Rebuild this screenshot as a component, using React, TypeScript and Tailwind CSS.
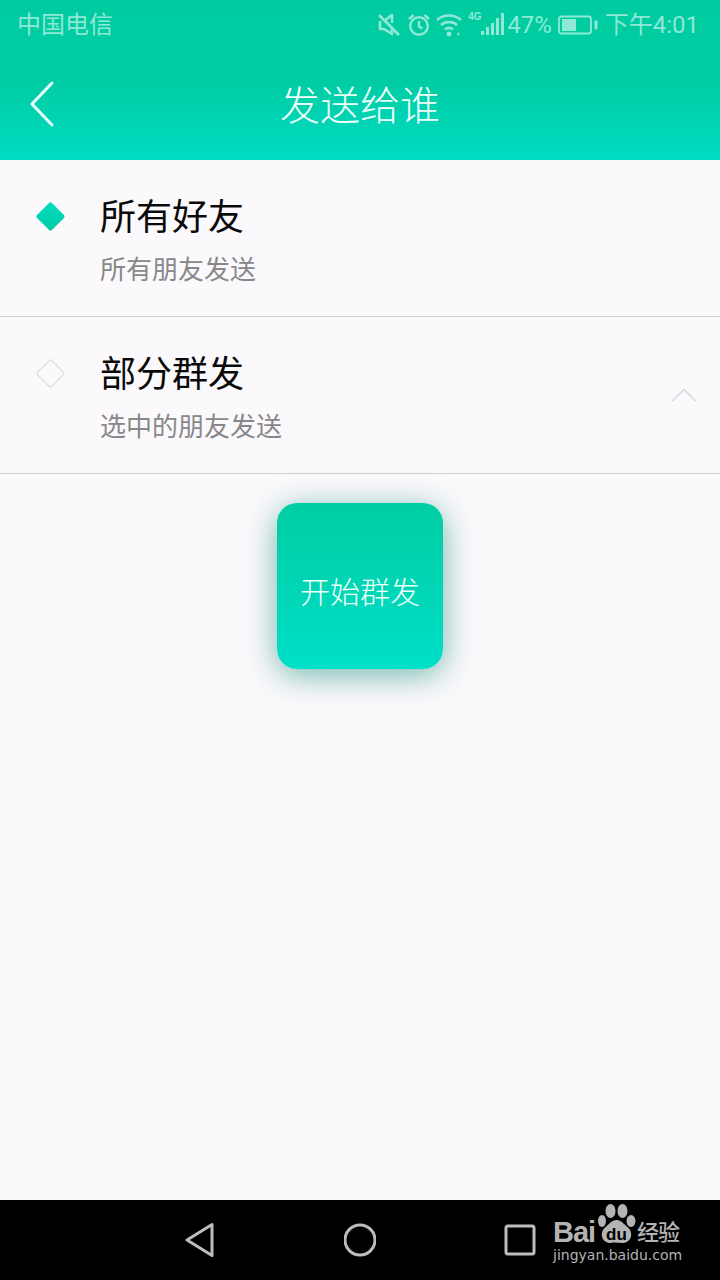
import React from 'react'

const cjk = 'font-["Roboto","Noto_Sans_CJK_SC",sans-serif]'

function StatusIcons() {
  return (
    <div className="flex items-center text-[#8fe9d6]">
      {/* mute */}
      <svg width="22" height="24" viewBox="0 0 22 24" fill="none" stroke="currentColor" strokeWidth="2.6" strokeLinejoin="round">
        <path d="M1 2l20 20" />
        <path d="M2 8v8h4l8 5v-7M6 8l8-6v8" />
      </svg>
      {/* alarm */}
      <svg className="ml-2" width="22" height="24" viewBox="0 0 22 24" fill="none" stroke="currentColor" strokeWidth="2.4">
        <circle cx="11" cy="13" r="8.800" />
        <path d="M11 8v5.500l3.500 2" />
        <path d="M1 6l4.500-4M21 6l-4.500-4" />
      </svg>
      {/* wifi */}
      <svg className="ml-1.5" width="26" height="24" viewBox="0 0 26 24" fill="none" stroke="currentColor" strokeWidth="2.6">
        <path d="M1 7c7-6 17-6 24 0" />
        <path d="M5 12c4.500-4 11.500-4 16 0" />
        <path d="M9 16.500c2.500-2 5.500-2 8 0" />
        <circle cx="13" cy="21" r="2.400" fill="currentColor" stroke="none" />
        <path d="M21.500 19l2.500 2-2.500 2z" fill="currentColor" stroke="none" />
      </svg>
      <div className="relative ml-1.5 flex h-6 w-[36px] items-end justify-end">
        <span className="absolute left-0 top-[-2px] font-['Liberation_Sans',sans-serif] text-[10px] font-bold leading-[12px]">4G</span>
        <svg width="24" height="24" viewBox="0 0 24 24" fill="currentColor">
          <rect x="1" y="18" width="3" height="4" />
          <rect x="6" y="14" width="3" height="8" />
          <rect x="11" y="10" width="3" height="12" />
          <rect x="16" y="5" width="3" height="17" />
          <rect x="21" y="0" width="3" height="22" />
        </svg>
      </div>
      <span className="ml-[3px] font-['Roboto',sans-serif] text-[24px] leading-none">47%</span>
      {/* battery */}
      <svg className="ml-[6px]" width="40" height="20" viewBox="0 0 40 20" fill="none">
        <rect x="1" y="1.500" width="32" height="17" rx="2.500" stroke="currentColor" strokeWidth="1.800" />
        <rect x="4" y="4" width="14" height="12" fill="currentColor" />
        <rect x="36.500" y="5.500" width="3" height="9" rx="1" fill="currentColor" />
      </svg>
      <span className={`ml-[7px] ${cjk} text-[24px] leading-none`}>下午4:01</span>
    </div>
  )
}

function Row({ active, title, sub, chevron }: { active?: boolean; title: string; sub: string; chevron?: boolean }) {
  return (
    <div className="relative flex h-[157px] border-b border-[#cfcfd1]">
      <div className="flex w-[100px] shrink-0 justify-center pt-[46px]">
        <div
          className={
            active
              ? 'h-[21px] w-[21px] rotate-45 rounded-[2px] bg-gradient-to-br from-[#00dcc4] to-[#00cba0]'
              : 'h-[21px] w-[21px] rotate-45 rounded-[2px] border-[1.500px] border-[#d9d9db]'
          }
        />
      </div>
      <div className="flex flex-col pt-[32px]">
        <div className={`${cjk} text-[36px] leading-[52px] text-[#0a0a0a]`}>{title}</div>
        <div className={`${cjk} mt-[7px] text-[26px] leading-[38px] text-[#88888a]`}>{sub}</div>
      </div>
      {chevron && (
        <svg className="absolute right-[23px] top-[70px]" width="26" height="16" viewBox="0 0 26 16" fill="none" stroke="#d6d6d8" strokeWidth="1.500">
          <path d="M1.500 14L13 2.500 24.500 14" />
        </svg>
      )}
    </div>
  )
}

function BaiduMark() {
  return (
    <div className="absolute left-[553px] top-[1203px] h-[68px] w-[130px] text-[#b4b4b4]">
      <span className="absolute left-0 top-[17px] font-['Liberation_Sans',sans-serif] text-[29px] font-bold leading-[24px] tracking-[-1px]">Bai</span>
      <svg className="absolute left-[44px] top-0" width="40" height="42" viewBox="0 0 40 42" fill="currentColor">
        <ellipse cx="13.500" cy="8" rx="5" ry="7" />
        <ellipse cx="25.500" cy="8" rx="5" ry="7" />
        <ellipse cx="5" cy="18" rx="4" ry="6" />
        <ellipse cx="34" cy="18" rx="4.500" ry="6" />
        <path d="M19.500 17c5 0 7 4 12 8 5 5 3 15-6 15-4 0-8-1-12 0-9 0-11-10-6-15 5-4 7-8 12-8z" />
        <text x="19.500" y="37" textAnchor="middle" fontFamily="Liberation Sans, sans-serif" fontSize="17" fontWeight="700" fill="#000">du</text>
      </svg>
      <span className={`absolute left-[84px] top-[17px] ${cjk} text-[22px] font-medium leading-[26px] tracking-[-1px]`}>经验</span>
      <span className="absolute left-0 top-[44px] font-['DejaVu_Sans',sans-serif] text-[14px] leading-[16px]">jingyan.baidu.com</span>
    </div>
  )
}

export default function App() {
  return (
    <div className="relative flex h-[1280px] w-[720px] flex-col overflow-hidden bg-[#fbf9fc]">
      {/* Header */}
      <div className="h-[160px] shrink-0 bg-gradient-to-b from-[#00cba0] via-[#00cca3] to-[#00dcc4]">
        <div className="flex h-[50px] items-center justify-between pl-[17px] pr-[21px]">
          <span className={`${cjk} text-[24px] leading-none text-[#8fe9d6]`}>中国电信</span>
          <StatusIcons />
        </div>
        <div className="relative flex h-[110px] items-center justify-center">
          <svg className="absolute left-[29px] top-[31px]" width="26" height="46" viewBox="0 0 26 46" fill="none" stroke="#ecfffb" strokeWidth="3" strokeLinecap="round" strokeLinejoin="round">
            <path d="M23 2L3 23l20 21" />
          </svg>
          <span className={`${cjk} pt-[4px] text-[40px] font-light leading-none text-[#effffb]`}>发送给谁</span>
        </div>
      </div>

      <Row active title="所有好友" sub="所有朋友发送" />
      <Row title="部分群发" sub="选中的朋友发送" chevron />

      {/* Button */}
      <div className="flex flex-1 justify-center pt-[29px]">
        <div className="flex h-[166px] w-[166px] items-center justify-center rounded-[20px] bg-gradient-to-b from-[#00cda2] to-[#00dfc8] pt-[14px] shadow-[0_6px_32px_rgba(0,130,110,0.55)]">
          <span className={`${cjk} text-[30px] font-light leading-none text-[#effffb]`}>开始群发</span>
        </div>
      </div>

      {/* Nav bar */}
      <div className="flex h-[80px] shrink-0 items-center justify-center gap-[128px] bg-black">
        <svg width="32" height="36" viewBox="0 0 32 36" fill="none" stroke="#bdbdbd" strokeWidth="3" strokeLinejoin="round">
          <path d="M28 2.500v31L3 18z" />
        </svg>
        <svg width="32" height="36" viewBox="0 0 32 36" fill="none" stroke="#bdbdbd" strokeWidth="3">
          <circle cx="16" cy="18" r="15" />
        </svg>
        <svg width="32" height="36" viewBox="0 0 32 36" fill="none" stroke="#bdbdbd" strokeWidth="3" strokeLinejoin="round">
          <rect x="2" y="4" width="28" height="28" rx="2" />
        </svg>
      </div>

      <BaiduMark />
    </div>
  )
}
